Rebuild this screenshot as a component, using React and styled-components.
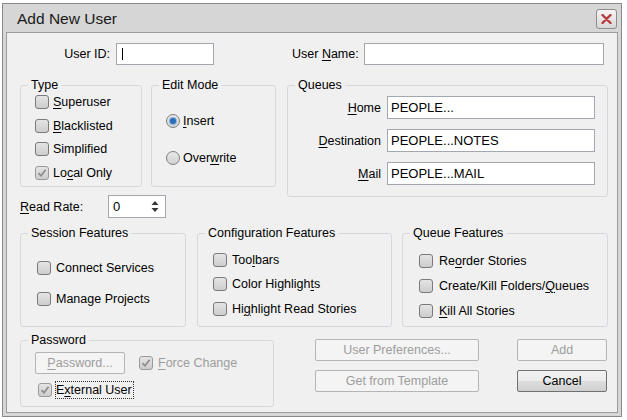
import React from "react";
import styled, { createGlobalStyle } from "styled-components";

const Global = createGlobalStyle`
  html, body { margin: 0; padding: 0; background: #ffffff; }
  body { font-family: "Liberation Sans", Arial, sans-serif; font-size: 12.5px; color: #000; }
  * { box-sizing: border-box; }
`;

const Window = styled.div`
  margin: 3px 0 0 2px;
  width: 620px;
  height: 414px;
  border: 1px solid #8a8a8a;
  background: #d6d6d6;
  padding: 0 3px 3px 3px;
  display: flex;
  flex-direction: column;
`;

const TitleBar = styled.div`
  height: 28px;
  display: flex;
  align-items: center;
  justify-content: space-between;
  padding: 0 1px 0 11px;
`;

const Title = styled.div`
  font-size: 15.5px;
  color: #1a1a1a;
  padding-top: 1px;
`;

const CloseBtn = styled.div`
  width: 21px;
  height: 20px;
  border: 1px solid #8d8d8d;
  border-radius: 3px;
  background: linear-gradient(#f4f4f4, #d8d8d8);
  display: flex;
  align-items: center;
  justify-content: center;
  margin-top: 1px;
`;

const Body = styled.div`
  flex: 1;
  border: 1px solid #9c9c9c;
  background: #f0f0f0;
  padding: 10px 9px 0 13px;
  display: flex;
  flex-direction: column;
`;

const Row = styled.div`
  display: flex;
  align-items: ${(p) => p.$align || "center"};
  margin-top: ${(p) => p.$mt || 0}px;
  gap: ${(p) => p.$gap || 0}px;
`;

const Label = styled.span`
  width: ${(p) => (p.$w ? `${p.$w}px` : "auto")};
  text-align: ${(p) => p.$align || "left"};
  margin-left: ${(p) => p.$ml || 0}px;
  margin-right: ${(p) => p.$mr || 0}px;
  color: ${(p) => (p.$disabled ? "#9d9d9d" : "#000")};
  white-space: nowrap;
`;

const Input = styled.div`
  width: ${(p) => p.$w}px;
  height: ${(p) => p.$h || 22}px;
  margin-left: ${(p) => p.$ml || 0}px;
  border: 1px solid #a3a8ae;
  background: #fff;
  padding: 0 3px;
  display: flex;
  align-items: center;
  font-size: 13px;
`;

const Caret = styled.span`
  display: inline-block;
  width: 1px;
  height: 12px;
  background: #000;
  margin-left: 2px;
`;

const Spin = styled(Input)`
  justify-content: space-between;
  padding: 0 6px 0 4px;
`;

const Group = styled.div`
  position: relative;
  width: ${(p) => p.$w}px;
  height: ${(p) => p.$h}px;
  border: 1px solid #d5d9dd;
  border-radius: 3px;
  padding: ${(p) => p.$pad || "0"};
  flex-shrink: 0;
`;

const Legend = styled.span`
  position: absolute;
  top: -8px;
  left: 7px;
  padding: 0 3px;
  line-height: 15px;
  background: #f0f0f0;
  white-space: nowrap;
`;

const Stack = styled.div`
  display: flex;
  flex-direction: column;
`;

const Item = styled.div`
  height: ${(p) => p.$h}px;
  display: flex;
  align-items: center;
  gap: ${(p) => p.$gap || 5}px;
  margin-left: ${(p) => p.$ml || 0}px;
  white-space: nowrap;
  color: ${(p) => (p.$disabled ? "#9d9d9d" : "#000")};
`;

const Box = styled.span`
  width: 14px;
  height: 14px;
  flex-shrink: 0;
  border: 1px solid ${(p) => (p.$disabled ? "#9a9a9a" : "#7a7a7a")};
  border-radius: 3px;
  background: linear-gradient(#e4e4e4, #cdcdcd);
  display: flex;
  align-items: center;
  justify-content: center;
`;

const Round = styled.span`
  width: 14px;
  height: 14px;
  flex-shrink: 0;
  border: 1px solid #7e7e7e;
  border-radius: 50%;
  background: linear-gradient(#e8e8e8, #d2d2d2);
  display: flex;
  align-items: center;
  justify-content: center;
`;

const Dot = styled.span`
  width: 6px;
  height: 6px;
  border-radius: 50%;
  background: #2a6fb8;
  box-shadow: 0 0 0 1px #8fb4de;
`;

const Focus = styled.span`
  outline: 1px dotted #333;
  outline-offset: 0;
  padding: 1px 1px 1px 0;
`;

const Button = styled.div`
  width: ${(p) => p.$w}px;
  height: 22px;
  border: 1px solid ${(p) => (p.$disabled ? "#b5b5b5" : "#707070")};
  border-radius: 2px;
  background: ${(p) =>
    p.$disabled ? "#f4f4f4" : "linear-gradient(#f2f2f2 0%, #ebebeb 50%, #dddddd 51%, #cfcfcf 100%)"};
  color: ${(p) => (p.$disabled ? "#9d9d9d" : "#000")};
  display: flex;
  align-items: center;
  justify-content: center;
  white-space: nowrap;
`;

const Col = styled.div`
  display: flex;
  flex-direction: column;
  gap: ${(p) => p.$gap || 0}px;
  margin-left: ${(p) => p.$ml || 0}px;
  margin-top: ${(p) => p.$mt || 0}px;
`;

const QueueRow = styled.div`
  display: flex;
  align-items: center;
  justify-content: flex-end;
  height: 23px;
  margin-bottom: 10px;
  gap: 6px;
`;

const U = ({ children }) => <u style={{ textDecorationThickness: "1px", textUnderlineOffset: "2px" }}>{children}</u>;

const Check = ({ checked, disabled }) => (
  <Box $disabled={disabled}>
    {checked && (
      <svg width="10" height="10" viewBox="0 0 10 10">
        <path d="M1.5 5.2 L4 7.8 L8.6 1.8" fill="none" stroke="#8c8c8c" strokeWidth="1.7" />
      </svg>
    )}
  </Box>
);

const Radio = ({ checked }) => <Round>{checked && <Dot />}</Round>;

export default function App() {
  return (
    <>
      <Global />
      <Window>
        <TitleBar>
          <Title>Add New User</Title>
          <CloseBtn>
            <svg width="11" height="10" viewBox="0 0 11 10">
              <path d="M1.5 1 L9.5 9 M9.5 1 L1.5 9" stroke="#b83a3a" strokeWidth="2.4" strokeLinecap="round" />
            </svg>
          </CloseBtn>
        </TitleBar>
        <Body>
          <Row>
            <Label $w={90} $align="right">User ID:</Label>
            <Input $w={98} $ml={6}><Caret /></Input>
            <Label $ml={78}>User <U>N</U>ame:</Label>
            <Input $w={240} $ml={5} />
          </Row>

          <Row $align="flex-start" $mt={20}>
            <Col>
              <Row $align="flex-start">
                <Group $w={122} $h={102} $pad="4px 0 0 14px">
                  <Legend>Type</Legend>
                  <Stack>
                    <Item $h={23.7} $gap={4}><Check /><span><U>S</U>uperuser</span></Item>
                    <Item $h={23.7} $gap={4}><Check /><span><U>B</U>lacklisted</span></Item>
                    <Item $h={23.7} $gap={4}><Check /><span>Simplified</span></Item>
                    <Item $h={23.7} $gap={4}><Check checked disabled /><span>Lo<U>c</U>al Only</span></Item>
                  </Stack>
                </Group>
                <Group $w={125} $h={102} $pad="25px 0 0 14px" style={{ marginLeft: 9 }}>
                  <Legend>Edit Mode</Legend>
                  <Stack>
                    <Item $h={20} $gap={3}><Radio checked /><span><U>I</U>nsert</span></Item>
                    <Item $h={20} $gap={3} style={{ marginTop: 16.7 }}><Radio /><span>Over<U>w</U>rite</span></Item>
                  </Stack>
                </Group>
              </Row>
              <Row $mt={8}>
                <Label $w={88}><U>R</U>ead Rate:</Label>
                <Spin $w={58} $h={23}>
                  <span>0</span>
                  <svg width="8" height="13" viewBox="0 0 8 13">
                    <path d="M4 1 L7.5 5 L0.5 5 Z M4 12 L7.5 8 L0.5 8 Z" fill="#333" />
                  </svg>
                </Spin>
              </Row>
            </Col>
            <Group $w={321} $h={112} $pad="10px 12px 0 0" style={{ marginLeft: 11 }}>
              <Legend>Queues</Legend>
              <QueueRow><span><U>H</U>ome</span><Input $w={208} $h={23}>PEOPLE...</Input></QueueRow>
              <QueueRow><span><U>D</U>estination</span><Input $w={208} $h={23}>PEOPLE...NOTES</Input></QueueRow>
              <QueueRow><span><U>M</U>ail</span><Input $w={208} $h={23}>PEOPLE...MAIL</Input></QueueRow>
            </Group>
          </Row>

          <Row $align="flex-start" $mt={15}>
            <Group $w={166} $h={94} $pad="21px 0 0 16px">
              <Legend>Session Features</Legend>
              <Stack>
                <Item $h={25} $gap={5}><Check /><span>Connect Services</span></Item>
                <Item $h={25} $gap={5} style={{ marginTop: 6 }}><Check /><span>Manage Projects</span></Item>
              </Stack>
            </Group>
            <Group $w={195} $h={94} $pad="14px 0 0 15px" style={{ marginLeft: 11 }}>
              <Legend>Configuration Features</Legend>
              <Stack>
                <Item $h={24.3} $gap={5}><Check /><span>Too<U>l</U>bars</span></Item>
                <Item $h={24.3} $gap={5}><Check /><span>Color Highligh<U>t</U>s</span></Item>
                <Item $h={24.3} $gap={5}><Check /><span>Hi<U>g</U>hlight Read Stories</span></Item>
              </Stack>
            </Group>
            <Group $w={206} $h={94} $pad="14px 0 0 16px" style={{ marginLeft: 10 }}>
              <Legend>Queue Features</Legend>
              <Stack>
                <Item $h={25} $gap={6}><Check /><span>Re<U>o</U>rder Stories</span></Item>
                <Item $h={25} $gap={6}><Check /><span>Create/Kill Folders/<U>Q</U>ueues</span></Item>
                <Item $h={25} $gap={6}><Check /><span><U>K</U>ill All Stories</span></Item>
              </Stack>
            </Group>
          </Row>

          <Row $align="flex-start" $mt={13}>
            <Group $w={254} $h={67} $pad="11px 0 0 14px">
              <Legend>Password</Legend>
              <Row>
                <Button $w={90} $disabled><span><U>P</U>assword...</span></Button>
                <Item $h={22} $gap={5} $ml={14} $disabled><Check checked disabled /><span><U>F</U>orce Change</span></Item>
              </Row>
              <Item $h={20} $gap={4} $ml={3} style={{ marginTop: 6 }}>
                <Check checked disabled />
                <Focus>E<U>x</U>ternal User</Focus>
              </Item>
            </Group>
            <Col $gap={9} $ml={41} $mt={-1}>
              <Button $w={164} $disabled>User Preferences...</Button>
              <Button $w={164} $disabled>Get from Template</Button>
            </Col>
            <Col $gap={9} $ml={38} $mt={-1}>
              <Button $w={90} $disabled>Add</Button>
              <Button $w={90}>Cancel</Button>
            </Col>
          </Row>
        </Body>
      </Window>
    </>
  );
}
